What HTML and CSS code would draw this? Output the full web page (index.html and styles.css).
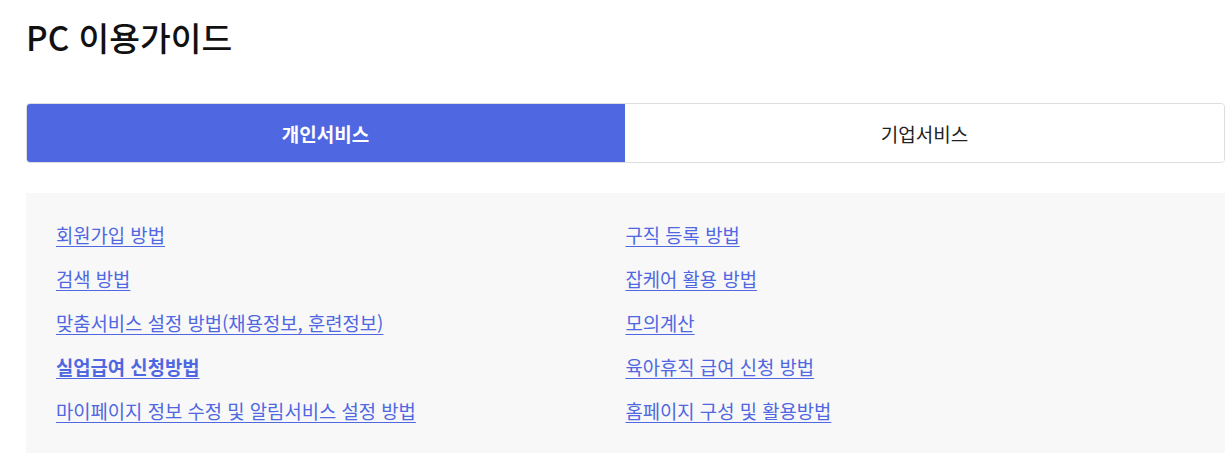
FILE: index.html
```html
<!DOCTYPE html>
<html lang="ko">
<head>
<meta charset="utf-8">
<title>PC 이용가이드</title>
<link rel="stylesheet" href="styles.css">
</head>
<body>
<div class="page">
  <h1 class="title">PC 이용가이드</h1>
  <div class="tabs">
    <a class="tab tab-active" href="#">개인서비스</a>
    <a class="tab" href="#">기업서비스</a>
  </div>
  <div class="guide">
    <ul class="col">
      <li><a href="#">회원가입 방법</a></li>
      <li><a href="#">검색 방법</a></li>
      <li><a href="#">맞춤서비스 설정 방법(채용정보, 훈련정보)</a></li>
      <li><a class="strong" href="#">실업급여 신청방법</a></li>
      <li><a href="#">마이페이지 정보 수정 및 알림서비스 설정 방법</a></li>
    </ul>
    <ul class="col">
      <li><a href="#">구직 등록 방법</a></li>
      <li><a href="#">잡케어 활용 방법</a></li>
      <li><a href="#">모의계산</a></li>
      <li><a href="#">육아휴직 급여 신청 방법</a></li>
      <li><a href="#">홈페이지 구성 및 활용방법</a></li>
    </ul>
  </div>
</div>
</body>
</html>
```

FILE: styles.css
```css
html, body {
  margin: 0;
  padding: 0;
  background: #ffffff;
}
body {
  font-family: "Noto Sans CJK KR", "Noto Sans", sans-serif;
  color: #111111;
}
.page {
  width: 1199px;
  margin-left: 26px;
}
.title {
  margin: 17px 0 0;
  font-size: 33.4px;
  line-height: 40px;
  font-weight: 500;
  color: #111111;
}
.tabs {
  display: flex;
  margin-top: 46px;
  height: 60px;
  border: 1px solid #dddddd;
  border-radius: 4px;
  box-sizing: border-box;
  overflow: hidden;
}
.tab {
  flex: 1;
  display: flex;
  align-items: center;
  justify-content: center;
  font-size: 19px;
  color: #222222;
  text-decoration: none;
  background: #ffffff;
}
.tab-active {
  background: #4f67e1;
  color: #ffffff;
  font-weight: 700;
  margin: -1px 0 -1px -1px;
}
.guide {
  display: grid;
  grid-template-columns: 1fr 1fr;
  margin-top: 30px;
  padding: 20px 30px;
  background: #f8f8f8;
}
.col {
  list-style: none;
  margin: 0;
  padding: 0;
}
.col li {
  height: 44px;
  display: flex;
  align-items: center;
}
.col a {
  font-size: 18.8px;
  line-height: 26px;
  color: #4f67e1;
  text-decoration: underline;
  text-underline-offset: 3px;
}
.col a.strong {
  font-weight: 700;
}
```
